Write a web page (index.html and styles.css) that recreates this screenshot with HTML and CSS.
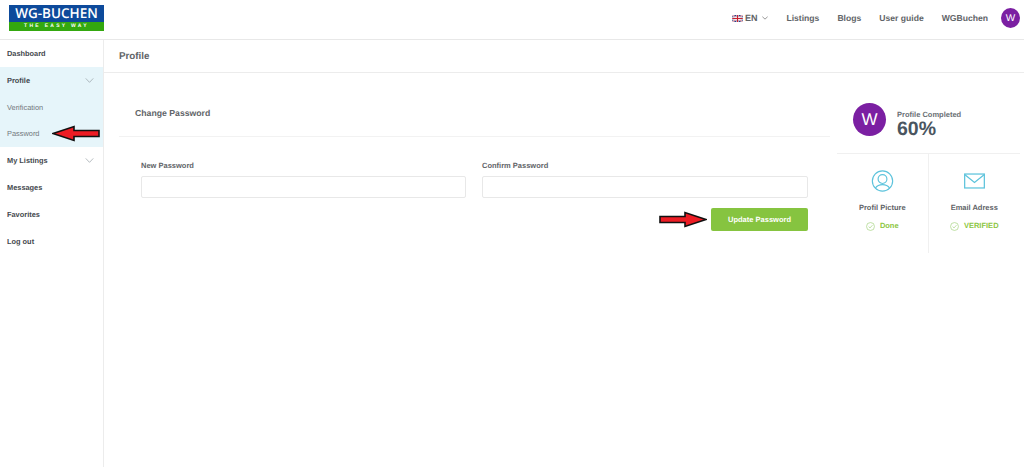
FILE: index.html
```html
<!DOCTYPE html>
<html lang="en">
<head>
<meta charset="utf-8">
<title>Change Password</title>
<link rel="stylesheet" href="styles.css">
</head>
<body>
<header class="topbar">
  <a class="logo">
    <span class="logo-top">WG-BUCHEN</span>
    <span class="logo-bottom">THE EASY WAY</span>
  </a>
  <nav class="topnav">
    <span class="lang">
      <svg class="flag" viewBox="0 0 12 8" width="11" height="7"><rect width="12" height="8" fill="#2b3f87"/><path d="M0 0L12 8M12 0L0 8" stroke="#fff" stroke-width="1.6"/><path d="M0 0L12 8M12 0L0 8" stroke="#c8202f" stroke-width=".6"/><path d="M6 0V8M0 4H12" stroke="#fff" stroke-width="2.6"/><path d="M6 0V8M0 4H12" stroke="#c8202f" stroke-width="1.4"/></svg>
      EN
      <svg class="caret" viewBox="0 0 8 5" width="6" height="4"><path d="M.5.8L4 4 7.5.8" fill="none" stroke="#777" stroke-width="1"/></svg>
    </span>
    <a>Listings</a>
    <a>Blogs</a>
    <a>User guide</a>
    <a>WGBuchen</a>
    <span class="avatar avatar-small">W</span>
  </nav>
</header>
<div class="layout">
  <aside class="sidebar">
    <a class="side-item">Dashboard</a>
    <div class="side-group">
      <a class="side-item">Profile <svg class="chev" viewBox="0 0 10 6" width="9" height="5"><path d="M.5.5L5 5.2 9.5.5" fill="none" stroke="#8f9aa0" stroke-width=".8"/></svg></a>
      <a class="side-sub">Verification</a>
      <a class="side-sub">Password</a>
    </div>
    <a class="side-item">My Listings <svg class="chev" viewBox="0 0 10 6" width="9" height="5"><path d="M.5.5L5 5.2 9.5.5" fill="none" stroke="#8f9aa0" stroke-width=".8"/></svg></a>
    <a class="side-item">Messages</a>
    <a class="side-item">Favorites</a>
    <a class="side-item">Log out</a>
    <svg class="arrow arrow-left" viewBox="0 0 48 17" width="48" height="17"><path d="M1 8.500L22 1.500V5.500H47V11.500H22V15.500Z" fill="#ed1c24" stroke="#111" stroke-width="1.600"/></svg>
  </aside>
  <main class="main">
    <div class="page-title">Profile</div>
    <div class="content">
      <section class="form-panel">
        <h2 class="form-title">Change Password</h2>
        <form class="form">
          <div class="fields">
            <label class="field"><span>New Password</span><input type="password"></label>
            <label class="field"><span>Confirm Password</span><input type="password"></label>
          </div>
          <div class="actions">
            <svg class="arrow arrow-right" viewBox="0 0 48 17" width="48" height="17"><path d="M47 8.500L26 1.500V5.500H1V11.500H26V15.500Z" fill="#ed1c24" stroke="#111" stroke-width="1.600"/></svg>
            <button type="button" class="btn">Update Password</button>
          </div>
        </form>
      </section>
      <aside class="status">
        <div class="completion">
          <span class="avatar avatar-large">W</span>
          <div class="completion-text">
            <div class="completion-label">Profile Completed</div>
            <div class="completion-value">60%</div>
          </div>
        </div>
        <div class="cards">
          <div class="card">
            <svg class="card-icon" viewBox="0 0 24 24" width="23" height="23" fill="none" stroke="#5cc3dc" stroke-width="1.200"><circle cx="12" cy="12" r="10.600"/><circle cx="12" cy="10" r="4.600"/><path d="M4.600 19.400C6.500 16.600 9 15.800 12 15.800s5.500.8 7.400 3.600"/></svg>
            <div class="card-title">Profil Picture</div>
            <div class="card-state"><svg viewBox="0 0 10 10" width="9" height="9" fill="none" stroke="#a9d585" stroke-width=".8"><circle cx="5" cy="5" r="4.400"/><path d="M2.900 5.100L4.500 6.600 7.200 3.500"/></svg>Done</div>
          </div>
          <div class="card">
            <svg class="card-icon" viewBox="0 0 22 16" width="21" height="15" fill="none" stroke="#5cc3dc" stroke-width="1.300"><rect x=".7" y=".7" width="20.600" height="14.600"/><path d="M1 1.500L11 9.500 21 1.500"/></svg>
            <div class="card-title">Email Adress</div>
            <div class="card-state"><svg viewBox="0 0 10 10" width="9" height="9" fill="none" stroke="#a9d585" stroke-width=".8"><circle cx="5" cy="5" r="4.400"/><path d="M2.900 5.100L4.500 6.600 7.200 3.500"/></svg>VERIFIED</div>
          </div>
        </div>
      </aside>
    </div>
  </main>
</div>
</body>
</html>
```
FILE: styles.css
```css
* { box-sizing: border-box; }
html, body { margin: 0; padding: 0; }
body {
  width: 1024px;
  height: 467px;
  overflow: hidden;
  background: #fff;
  font-family: "Liberation Sans", Arial, sans-serif;
  color: #4a4f55;
  text-rendering: geometricPrecision;
}
.topbar {
  height: 40px;
  border-bottom: 1px solid #e8e8e8;
  display: flex;
  align-items: flex-start;
  justify-content: space-between;
  padding: 5px 4px 0 9px;
}
.logo {
  width: 95px;
  height: 26px;
  display: flex;
  flex-direction: column;
}
.logo-top {
  height: 17px;
  background: #0d4a9b;
  color: #fff;
  font-family: "Open Sans", sans-serif;
  font-size: 13.500px;
  font-weight: 600;
  line-height: 17px;
  text-align: center;
}
.logo-bottom {
  height: 9px;
  background: #33a80f;
  color: #fff;
  font-size: 5px;
  font-weight: 700;
  line-height: 9px;
  text-align: center;
  letter-spacing: 2.300px;
}
.topnav {
  display: flex;
  align-items: center;
  height: 26px;
  font-size: 8.600px;
  font-weight: 700;
  color: #5f6468;
}
.topnav a { margin-left: 18px; }
.lang { display: flex; align-items: center; gap: 2px; font-size: 9px; }
.caret { margin-left: 3px; }
.avatar {
  display: flex;
  align-items: center;
  justify-content: center;
  border-radius: 50%;
  background: #7b1fa2;
  color: #fff;
  font-weight: 400;
  flex: none;
}
.avatar-small { width: 19px; height: 20px; font-size: 10px; margin-left: 13px; }
.avatar-large { width: 33px; height: 33px; font-size: 17px; }
.layout { display: flex; height: 427px; }
.sidebar {
  position: relative;
  width: 104px;
  flex: none;
  border-right: 1px solid #ececec;
}
.side-item, .side-sub {
  display: flex;
  align-items: center;
  justify-content: space-between;
  height: 27px;
  padding: 0 9px 0 7px;
  font-size: 7.400px;
}
.side-item { font-weight: 700; color: #44494e; }
.side-sub { height: 26.500px; color: #73787c; }
.side-group { background: #e6f5fa; }
.arrow { position: absolute; }
.arrow-left { left: 52px; top: 85px; }
.main { flex: 1; min-width: 0; }
.page-title {
  height: 33px;
  padding: 0 0 0 15px;
  border-bottom: 1px solid #ececec;
  display: flex;
  align-items: center;
  font-size: 9.800px;
  font-weight: 700;
  color: #5f6468;
}
.content { display: flex; }
.form-panel {
  width: 711px;
  margin-left: 15px;
}
.form-title {
  margin: 0;
  height: 64px;
  padding: 31px 0 0 16px;
  border-bottom: 1px solid #f2f2f2;
  font-size: 8.700px;
  line-height: 19px;
  font-weight: 700;
  color: #5f6468;
}
.form { padding: 22px 22px 0; }
.fields { display: grid; grid-template-columns: 325px 326px; gap: 16px; }
.field { display: block; }
.field span {
  display: block;
  font-size: 7.500px;
  font-weight: 700;
  line-height: 14px;
  color: #5f6468;
}
.field input {
  display: block;
  width: 100%;
  height: 22px;
  margin-top: 3px;
  border: 1px solid #e8e8e8;
  border-radius: 2px;
  background: #fff;
}
.actions {
  position: relative;
  display: flex;
  justify-content: flex-end;
  margin-top: 10px;
}
.arrow-right { right: 101px; top: 3px; }
.btn {
  width: 97px;
  height: 23px;
  border: 0;
  border-radius: 2px;
  background: #86c440;
  color: #fff;
  font: 700 7.500px "Liberation Sans", Arial, sans-serif;
  text-rendering: geometricPrecision;
}
.status { width: 183px; margin-left: 7px; }
.completion {
  height: 81px;
  display: flex;
  align-items: flex-start;
  padding: 30px 0 0 16px;
  border-bottom: 1px solid #f0f0f0;
}
.completion-text { margin-left: 11px; padding-top: 7px; }
.completion-label { font-size: 7.500px; font-weight: 700; line-height: 9px; color: #6a7075; }
.completion-value { font-size: 19.500px; font-weight: 700; line-height: 21px; color: #4a5560; }
.cards { display: flex; }
.card {
  width: 92px;
  height: 99px;
  padding-top: 15px;
  text-align: center;
}
.card:first-child { border-right: 1px solid #f0f0f0; }
.card-icon { display: block; margin: 0 auto; height: 24px; }
.card-title { margin-top: 10px; font-size: 7.500px; font-weight: 700; line-height: 10px; color: #5f6468; }
.card-state {
  margin-top: 8px;
  display: flex;
  justify-content: center;
  align-items: center;
  gap: 5px;
  font-size: 7.500px;
  font-weight: 700;
  line-height: 10px;
  color: #8cc63f;
}
```
